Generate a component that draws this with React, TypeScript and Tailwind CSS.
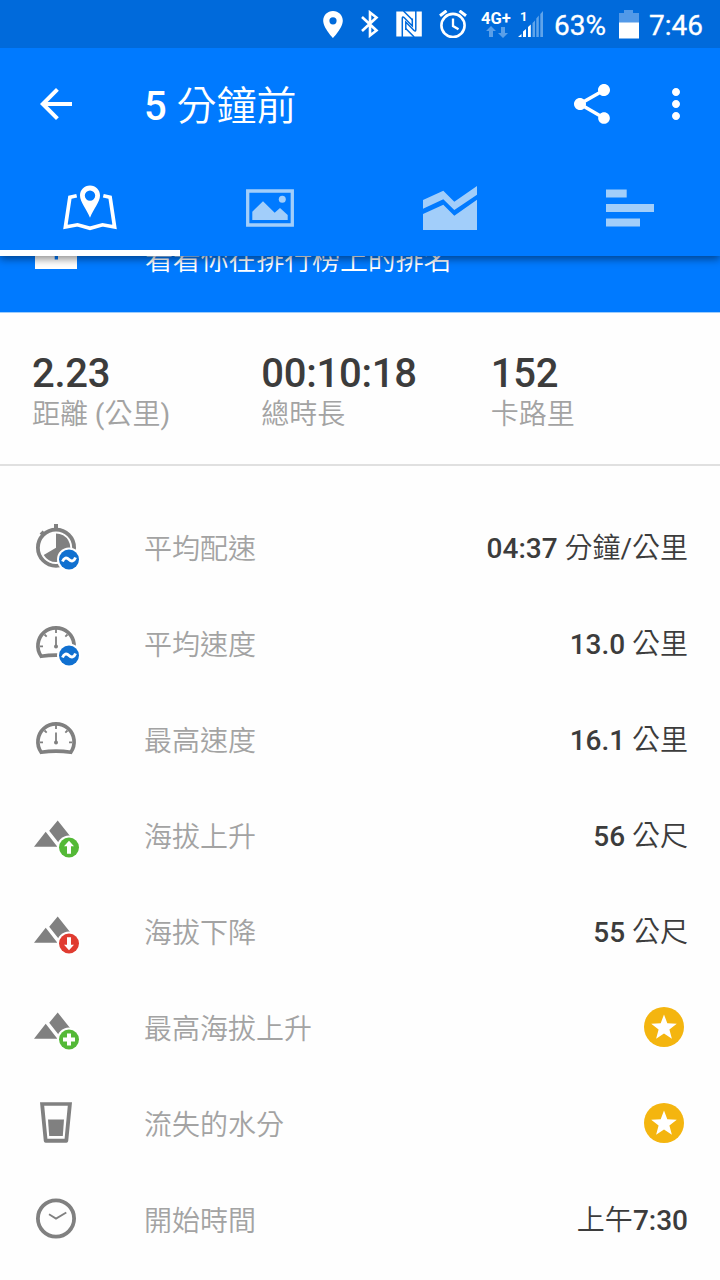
import type { ReactNode } from "react";
import { MdArrowBack, MdMoreVert, MdShare } from "react-icons/md";

const FONT = "font-['Roboto','Noto_Sans_CJK_TC',sans-serif]";

function StatusBar() {
  return (
    <div className="flex h-12 items-center justify-end bg-[#006adb] pr-4 text-white">
      <svg className="mr-[18px] h-[27px] w-5 shrink-0" viewBox="0 0 20 27" fill="currentColor">
        <path
          fillRule="evenodd"
          d="M10 0C4.4 0 .2 4.3.2 9.7.2 16.8 10 27 10 27s9.8-10.2 9.8-17.3C19.8 4.3 15.6 0 10 0Zm0 6.2a3.6 3.6 0 1 1 0 7.2 3.6 3.6 0 0 1 0-7.2Z"
        />
      </svg>
      <svg className="mr-[17px] h-7 w-[18px] shrink-0" viewBox="0 0 18 28" fill="none" stroke="currentColor" strokeWidth="2.6">
        <path d="M1 7l14.500 13.500L9 25.500V2.500l6.500 5L1 21" />
      </svg>
      <svg className="mr-[17px] h-[26px] w-[26px] shrink-0" viewBox="0 0 26 26">
        <path fill="#fff" d="M.3.500h25.500v25H.300z" />
        <path
          d="M6.300 26V7.500Q6.300 4.800 8.300 6.800L16.300 15V7.500"
          fill="none"
          stroke="#006adb"
          strokeWidth="1.500"
        />
        <path
          d="M19.800 0v18.500q0 2.700-2 .7L9.800 11v8"
          fill="none"
          stroke="#006adb"
          strokeWidth="1.500"
        />
        <path d="M7.500 0l9 9M9.700 17.500l8.500 8.500" fill="none" stroke="#006adb" strokeWidth="1.500" />
      </svg>
      <svg className="mr-[14px] h-7 w-[28px] shrink-0" viewBox="0 0 28 28" fill="none" stroke="currentColor">
        <circle cx="14" cy="15.500" r="11.600" strokeWidth="2.600" />
        <path d="M14 8.500v7.500l5.500 3.300" strokeWidth="2.300" />
        <path d="M1 5.700L7.500.8M27 5.700L20.500.8" strokeWidth="3" />
      </svg>
      <div className="mr-[5px] flex h-[28px] w-[32px] shrink-0 flex-col">
        <span className="h-[16px] whitespace-nowrap text-[16.5px] font-bold leading-[17px]">4G+</span>
        <svg className="ml-[5px] h-3 w-[22px]" viewBox="0 0 22 12" fill="#5a9fe8">
          <path d="M5 0l5 5H7v6H3V5H0zM17 12l-5-5h3V1h4v6h3z" />
        </svg>
      </div>
      <div className="relative mr-[11px] h-[27px] w-[25px] shrink-0">
        <span className="absolute left-[2px] top-[-1px] text-[13px] font-bold leading-[13px]">1</span>
        <svg className="h-[27px] w-[25px]" viewBox="0 0 25 27">
          <path fill="#fff" d="M0 26l3.500-3v3zM5 20.500l3-2.500v8H5zM10 16l2.800-2.500V26H10z" />
          <path fill="#5fa4ea" d="M14.500 12l2.500-2.500V26h-2.500zM18.300 7.500l2.500-3V26h-2.500zM22.300 3L25 0v26h-2.700z" />
        </svg>
      </div>
      <span className="w-[65px] pt-[3px] text-[28px] leading-[45px] [-webkit-text-stroke:0.3px_white]">63%</span>
      <svg className="mr-[10px] h-[30px] w-5 shrink-0" viewBox="0 0 20 30">
        <path fill="#5299e8" d="M0 4h5V1h9v3h6v10H0z" />
        <path fill="#fff" d="M0 13.500h20V29.500H0z" />
      </svg>
      <span className="w-[55px] pt-[3px] text-[28px] leading-[45px] [-webkit-text-stroke:0.3px_white]">7:46</span>
    </div>
  );
}

function Toolbar() {
  return (
    <div className="flex h-28 items-center pl-8 pr-5 text-white">
      <MdArrowBack className="h-12 w-12" />
      <h1 className="ml-16 flex-1 pt-[5px] text-[40px] font-[350] leading-[48px]">
        <span className="font-medium">5</span> 分鐘前
      </h1>
      <MdShare className="mr-9 h-12 w-12" />
      <MdMoreVert className="h-12 w-12" />
    </div>
  );
}

function Tab({ active = false, children }: { active?: boolean; children: ReactNode }) {
  return (
    <button
      className={
        active
          ? "flex h-24 items-center justify-center border-b-[6px] border-white pt-[6px] text-white"
          : "flex h-24 items-center justify-center text-[#a2cefa]"
      }
    >
      <svg className="h-[60px] w-[60px]" viewBox="0 0 60 60" fill="currentColor">
        {children}
      </svg>
    </button>
  );
}

function Tabs() {
  return (
    <nav className="grid grid-cols-4">
      <Tab active>
        <path
          fillRule="evenodd"
          d="M30 7.500c-5.800 0-10 4.500-10 10C20 24 26.500 31 30 39.700 33.500 31 40 24 40 17.500c0-5.500-4.200-10-10-10Zm0 4.900a5.200 5.200 0 1 1 0 10.400 5.200 5.200 0 0 1 0-10.400Z"
        />
        <path
          d="M16.700 17.700L9.900 19.300 5.400 49 17.500 46.800 30 50.300 42.500 46.800 54.600 49 50.100 19.300 43.300 17.700"
          fill="none"
          stroke="currentColor"
          strokeWidth="3.700"
        />
      </Tab>
      <Tab>
        <path d="M7.700 13h44.600v34H7.700z" fill="none" stroke="currentColor" strokeWidth="3.300" />
        <path d="M12.300 42v-8.300L23 23.300l11.700 11.400L40 30l7.700 7v5z" />
        <circle cx="42.300" cy="21.300" r="3.500" />
      </Tab>
      <Tab>
        <path d="M3 22l20.300-9.300 11 11L57 8v8.700L34.300 32l-11-10.700L3 30.700zM3 36l20.300-9.300 11 11L57 21.700V52H3z" />
      </Tab>
      <Tab>
        <path d="M6 11.500h20.700v8H6zM6 26h48v8H6zM6 40.500h34v8H6z" />
      </Tab>
    </nav>
  );
}

function LeaderboardBanner() {
  return (
    <section className="h-[57px] overflow-hidden border-b border-[#9fcdfb] bg-[#007aff]">
      <div className="-mt-[17px] flex items-start text-[28px] text-white">
        <svg className="ml-[35px] mr-[68px] h-[30px] w-[42px]" viewBox="0 0 42 30">
          <path fill="#fff" d="M0 6h42v24H0z" />
          <path fill="#007aff" d="M19.700 10h3.300v10.500h-3.300z" />
        </svg>
        <span className="pt-[2px] font-[350] leading-10 tracking-[-0.15px]">看看你在排行榜上的排名</span>
      </div>
    </section>
  );
}

function Stat({ value, label }: { value: string; label: ReactNode }) {
  return (
    <div>
      <div className="text-[40px] font-medium leading-[44px] tracking-[-0.25px] text-[#3c3c3c]">{value}</div>
      <div className="pt-[1px] text-[28px] font-[350] leading-9 text-[#a3a3a3]">{label}</div>
    </div>
  );
}

function Badge({ color, children }: { color: string; children: ReactNode }) {
  return (
    <g>
      <circle cx="41" cy="39.500" r="12" fill="#fff" />
      <circle cx="41" cy="39.500" r="10" fill={color} />
      {children}
    </g>
  );
}

function AverageBadge() {
  return (
    <Badge color="#1070d0">
      <path
        d="M34.500 41.500C36 37.500 38.500 37 41 39.500s5 2 6.500-2"
        fill="none"
        stroke="#fff"
        strokeWidth="2.900"
      />
    </Badge>
  );
}

function Stopwatch() {
  return (
    <>
      <path d="M26 4h4v5h-4zM11.600 13.500l3-3 3 3-3 3z" />
      <circle cx="28" cy="27.700" r="18.100" fill="none" stroke="currentColor" strokeWidth="3.800" />
      <path d="M28 27.700V13.400A14.300 14.300 0 1 1 15.700 35z" />
      <AverageBadge />
    </>
  );
}

function Gauge() {
  return (
    <>
      <path
        d="M13.200 40.300A18.100 18.100 0 1 1 42.800 40.300Q28 37.800 13.200 40.300Z"
        fill="none"
        stroke="currentColor"
        strokeWidth="3.700"
      />
      <path
        d="M28 13v4M12 30.300h3M41 30.300h3M16.500 18.500l2.200 2.200M39.500 18.500l-2.200 2.200M28 20.500v10"
        fill="none"
        stroke="currentColor"
        strokeWidth="1.800"
      />
      <circle cx="28" cy="30.500" r="2" />
    </>
  );
}

function Mountains() {
  return <path d="M6 38.700l11.700-15 11.700 15zM21.200 22.800L29.700 12.500 44 30.500 33 37.800z" />;
}

function StarAward() {
  return (
    <svg className="mr-1 h-10 w-10 -translate-y-[2px]" viewBox="0 0 40 40">
      <circle cx="20" cy="20" r="20" fill="#f4b50f" />
      <path
        fill="#fff"
        d="M20 7.500l3.300 8.800 9.500.4-7.400 5.900 2.500 9.100L20 26.500l-7.900 5.200 2.500-9.100-7.400-5.900 9.500-.4z"
      />
    </svg>
  );
}

function Row({ icon, label, children }: { icon: ReactNode; label: string; children: ReactNode }) {
  return (
    <li className="flex h-24 items-center pl-7 pr-8">
      <svg className="mr-[60px] h-14 w-14 text-[#808080]" viewBox="0 0 56 56" fill="currentColor">
        {icon}
      </svg>
      <span className="flex-1 pt-[3px] text-[28px] font-[350] leading-10 text-[#a3a3a3]">{label}</span>
      <span className="pt-[2px] text-[28px] font-[350] leading-10 text-[#3c3c3c]">{children}</span>
    </li>
  );
}

function Num({ children }: { children: ReactNode }) {
  return <span className="font-medium">{children}</span>;
}

export default function App() {
  return (
    <div className={`flex h-[1280px] w-[720px] flex-col overflow-hidden bg-[#fefefe] ${FONT}`}>
      <header className="relative z-10 bg-[#007aff] shadow-[0_3px_8px_rgba(0,0,0,0.45)]">
        <StatusBar />
        <Toolbar />
        <Tabs />
      </header>
      <LeaderboardBanner />
      <section className="grid h-[153px] grid-cols-3 border-b-2 border-[#e0e0e0] pl-8 pt-[39px]">
        <Stat
          value="2.23"
          label={
            <>
              距離 <span className="font-normal">(</span>公里<span className="font-normal">)</span>
            </>
          }
        />
        <Stat value="00:10:18" label="總時長" />
        <Stat value="152" label="卡路里" />
      </section>
      <ul className="pt-[34px]">
        <Row icon={<Stopwatch />} label="平均配速">
          <Num>04:37</Num> 分鐘<span className="font-normal">/</span>公里
        </Row>
        <Row icon={<><Gauge /><AverageBadge /></>} label="平均速度">
          <Num>13.0</Num> 公里
        </Row>
        <Row icon={<Gauge />} label="最高速度">
          <Num>16.1</Num> 公里
        </Row>
        <Row
          icon={
            <>
              <Mountains />
              <Badge color="#54b937">
                <path fill="#fff" d="M41 32.700l5 5.600h-3v7.500h-4v-7.500h-3z" />
              </Badge>
            </>
          }
          label="海拔上升"
        >
          <Num>56</Num> 公尺
        </Row>
        <Row
          icon={
            <>
              <Mountains />
              <Badge color="#e03c31">
                <path fill="#fff" d="M41 46.300l5-5.600h-3v-7.500h-4v7.500h-3z" />
              </Badge>
            </>
          }
          label="海拔下降"
        >
          <Num>55</Num> 公尺
        </Row>
        <Row
          icon={
            <>
              <Mountains />
              <Badge color="#54b937">
                <path fill="#fff" d="M39 33.500h4v4h4v4h-4v4h-4v-4h-4v-4h4z" />
              </Badge>
            </>
          }
          label="最高海拔上升"
        >
          <StarAward />
        </Row>
        <Row
          icon={
            <>
              <path
                fillRule="evenodd"
                d="M12 6.200h32l-3.800 38.800q-.2 1.700-1.800 1.700H17.600q-1.600 0-1.800-1.700zM16.200 9.700l3.200 33h17.200l3.200-33z"
              />
              <path d="M20 23.500h16L34.800 40H21.200z" />
            </>
          }
          label="流失的水分"
        >
          <StarAward />
        </Row>
        <Row
          icon={
            <>
              <circle cx="28" cy="26.500" r="18.100" fill="none" stroke="currentColor" strokeWidth="3.800" />
              <path d="M21 22.300l7 4.300 10.300-6.200" fill="none" stroke="currentColor" strokeWidth="1.800" />
            </>
          }
          label="開始時間"
        >
          上午<Num>7:30</Num>
        </Row>
      </ul>
    </div>
  );
}
